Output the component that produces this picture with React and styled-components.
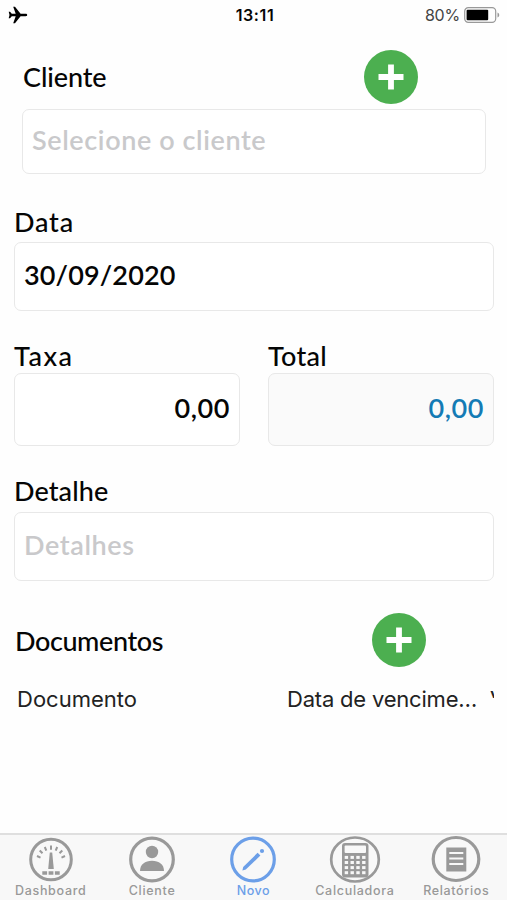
import React from 'react';
import styled, {createGlobalStyle} from 'styled-components';

const tabs = [
    {id: 'dashboard', label: 'Dashboard', spacing: 0.7},
    {id: 'client', label: 'Cliente', spacing: 0.7},
    {id: 'new', label: 'Novo', spacing: 0.5, active: true},
    {id: 'calculator', label: 'Calculadora', spacing: 0.7},
    {id: 'reports', label: 'Relatórios', spacing: 0.65},
];

const keyRows = [0, 1, 2, 3];

const icons = {
    dashboard: (
        <>
            <circle cx="26" cy="24.5" r="20.3" strokeWidth="3"/>
            <path strokeWidth="2" d="M12 21l3.5 1.6M14.7 15.5l2.8 2.8M19.8 12l1.5 3.6M26 10.5v4.3M32.2 12l-1.5 3.6M37.3 15.5l-2.8 2.8M40 21l-3.5 1.6"/>
            <path fill="currentColor" stroke="none" d="M24.8 17.5h2.4l1.6 16.5h-5.6z"/>
            <path strokeWidth="3.6" d="M17.3 38h4.8M23.6 38h4.8M29.9 38h4.8"/>
        </>
    ),
    client: (
        <>
            <circle cx="26" cy="24.5" r="21.3" strokeWidth="3.2"/>
            <circle cx="26" cy="17" r="6.2" fill="currentColor" stroke="none"/>
            <path fill="currentColor" stroke="none" d="M14 36c0-6.5 5-10.2 12-10.2s12 3.7 12 10.2z"/>
        </>
    ),
    new: (
        <>
            <circle cx="26" cy="24.5" r="21.3" strokeWidth="3.2"/>
            <path d="M15.4 35.4l.8-3.4L30.600 17.800l2.800 2.800L18.800 34.600z" fill="currentColor" stroke="none"/>
            <circle cx="35" cy="16" r="2.1" fill="currentColor" stroke="none"/>
        </>
    ),
    calculator: (
        <>
            <ellipse cx="26" cy="24.5" rx="23.8" ry="22" strokeWidth="2.7"/>
            <rect x="13" y="8" width="26.5" height="34.5" rx="3" fill="currentColor" stroke="none"/>
            <rect x="15.6" y="10.5" width="21.4" height="7.5" rx="1" fill="#f8f8f8" stroke="none"/>
            {keyRows.map(row => keyRows.map(col => (
                <rect
                    key={`${row}-${col}`}
                    x={15.7 + col * 5.8}
                    y={20.9 + row * 5.1}
                    width="3.4"
                    height="3"
                    fill="#f8f8f8"
                    stroke="none"
                />
            )))}
        </>
    ),
    reports: (
        <>
            <ellipse cx="26" cy="24" rx="22.8" ry="21.5" strokeWidth="3.2"/>
            <rect x="16.3" y="12.5" width="20" height="24" fill="currentColor" stroke="none"/>
            <path stroke="#f8f8f8" strokeWidth="2.2" d="M19.3 18h14M19.3 23.5h14M19.3 29h14"/>
        </>
    ),
};

const AddButton = () => (
    <StyledAdd aria-label="Adicionar">
        <svg width="26" height="26" viewBox="0 0 26 26">
            <path d="M13 .5v25M.5 13h25" stroke="#fff" strokeWidth="5.8"/>
        </svg>
    </StyledAdd>
);

const App = () => {
    return (
        <Screen>
            <GlobalStyle/>
            <StatusBar>
                <StatusSide>
                    <svg width="20" height="18" viewBox="0 0 20 18">
                        <path d="M19.2 9c0 .8-.7 1.2-1.6 1.2h-5L7 17.2H5.2l2.5-7H3.8L2 12.2H.7L1.5 9 .7 5.800H2l1.800 2h3.900L5.200.8H7l5.600 7h5c.9 0 1.600.4 1.600 1.200z"/>
                    </svg>
                </StatusSide>
                <Clock>13:11</Clock>
                <StatusSide $end>
                    <Percent>80%</Percent>
                    <svg width="36" height="16" viewBox="0 0 36 16">
                        <rect x=".7" y=".7" width="31" height="14.6" rx="3.6" fill="none" stroke="#999" strokeWidth="1.2"/>
                        <rect x="2.6" y="2.7" width="21.6" height="10.6" rx="1"/>
                        <path d="M33.5 5.5c2.3.7 2.3 4.3 0 5z" fill="#999"/>
                    </svg>
                </StatusSide>
            </StatusBar>
            <Form>
                <ClientField>
                    <ClientHeader>
                        <Label $spacing={-0.1}>Cliente</Label>
                        <AddButton/>
                    </ClientHeader>
                    <Input $height={65} $spacing={0.6} $placeholder>Selecione o cliente</Input>
                </ClientField>
                <Field $top={33}>
                    <Label $spacing={0.8}>Data</Label>
                    <Input $height={69} $spacing={0.15}>30/09/2020</Input>
                </Field>
                <Columns>
                    <Field>
                        <Label $spacing={1.5}>Taxa</Label>
                        <Input $height={73} $right>0,00</Input>
                    </Field>
                    <Field>
                        <Label $spacing={0.3}>Total</Label>
                        <Input $height={73} $right $readOnly>0,00</Input>
                    </Field>
                </Columns>
                <Field $top={30}>
                    <Label $spacing={0.1}>Detalhe</Label>
                    <Input $height={69} $gap={6} $spacing={0.6} $placeholder>Detalhes</Input>
                </Field>
                <DocumentsHeader>
                    <Label $spacing={-0.4}>Documentos</Label>
                    <AddButton/>
                </DocumentsHeader>
                <TableHead>
                    <HeadCell $width={270}>Documento</HeadCell>
                    <HeadCell $width={192} $spacing={-0.2}>Data de vencimento</HeadCell>
                    <ClippedCell>V</ClippedCell>
                </TableHead>
            </Form>
            <TabBar>
                {tabs.map(tab => (
                    <Tab key={tab.id} $active={tab.active}>
                        <svg width="52" height="48" viewBox="0 0 52 48" fill="none" stroke="currentColor">
                            {icons[tab.id]}
                        </svg>
                        <TabLabel $spacing={tab.spacing}>{tab.label}</TabLabel>
                    </Tab>
                ))}
            </TabBar>
        </Screen>
    )
};

const GlobalStyle = createGlobalStyle`
    * {
        box-sizing: border-box;
    }

    body {
        margin: 0;
        background: #fefefe;
    }
`;

const Screen = styled.div`
    display: flex;
    flex-direction: column;
    width: 507px;
    height: 900px;
    overflow: hidden;
    color: #050505;
    font-family: Inter, sans-serif;
`;

const StatusBar = styled.header`
    display: grid;
    grid-template-columns: 1fr auto 1fr;
    align-items: center;
    height: 29px;
    padding: 0 7px 0 8px;
`;

const StatusSide = styled.div`
    display: flex;
    align-items: center;
    justify-content: ${props => props.$end ? 'flex-end' : 'flex-start'};
    gap: 4px;
`;

const Clock = styled.span`
    padding-left: 2px;
    font-size: 16px;
    font-weight: 600;
    letter-spacing: 0.6px;
`;

const Percent = styled.span`
    color: #444;
    font-size: 16px;
    letter-spacing: -0.2px;
`;

const Form = styled.main`
    flex: 1;
    padding: 20px 13px 0 14px;
`;

const ClientField = styled.div`
    padding: 0 8px;
`;

const ClientHeader = styled.div`
    display: flex;
    align-items: center;
    justify-content: space-between;
    height: 60px;
    padding: 0 68px 5px 1px;
`;

const Field = styled.div`
    flex: 1;
    margin-top: ${props => props.$top || 0}px;
`;

const Columns = styled.div`
    display: flex;
    gap: 28px;
    margin-top: 30px;

    ${Field} > :last-child {
        margin-top: 2px;
    }
`;

const Label = styled.div`
    font-family: Lato, sans-serif;
    font-size: 27px;
    font-weight: 500;
    letter-spacing: ${props => props.$spacing}px;
    line-height: 30px;
`;

const Input = styled.div`
    display: flex;
    align-items: center;
    justify-content: ${props => props.$right ? 'flex-end' : 'flex-start'};
    height: ${props => props.$height}px;
    padding: 0 9px 5px;
    border: 1.5px solid #e8e8e8;
    border-radius: 7px;
    background: ${props => props.$readOnly ? '#fafafa' : '#fff'};
    color: ${props => props.$placeholder ? '#c9c9cb' : props.$readOnly ? '#147bb5' : '#050505'};
    font-family: Lato, sans-serif;
    font-size: 27px;
    font-weight: 600;
    letter-spacing: ${props => props.$spacing || 0.6}px;

    ${Field} & {
        margin-top: ${props => props.$gap || 5}px;
    }
`;

const DocumentsHeader = styled.div`
    display: flex;
    align-items: center;
    justify-content: space-between;
    height: 54px;
    margin-top: 32px;
    padding-right: 68px;

    ${Label} {
        padding: 2px 0 0 1px;
    }
`;

const StyledAdd = styled.button`
    display: flex;
    align-items: center;
    justify-content: center;
    width: 54px;
    height: 54px;
    padding: 0;
    border: 0;
    border-radius: 50%;
    background: #4caf50;
`;

const TableHead = styled.div`
    display: flex;
    margin-top: 17px;
    padding-left: 3px;
    color: #222;
    font-size: 22px;
    line-height: 30px;
`;

const HeadCell = styled.div`
    flex: none;
    width: ${props => props.$width}px;
    overflow: hidden;
    letter-spacing: ${props => props.$spacing || 0}px;
    text-overflow: ellipsis;
    white-space: nowrap;
`;

const ClippedCell = styled.div`
    width: 5px;
    height: 14px;
    margin-left: 11px;
    overflow: hidden;
`;

const TabBar = styled.nav`
    display: grid;
    grid-template-columns: repeat(5, 101.4px);
    height: 67px;
    border-top: 2px solid #dfdfdf;
    background: #f8f8f8;
`;

const Tab = styled.div`
    display: flex;
    flex-direction: column;
    align-items: center;
    color: ${props => props.$active ? '#6c9fe8' : '#999'};
`;

const TabLabel = styled.span`
    font-size: 12.5px;
    font-weight: 500;
    letter-spacing: ${props => props.$spacing}px;
    line-height: 16px;
`;

export default App;
